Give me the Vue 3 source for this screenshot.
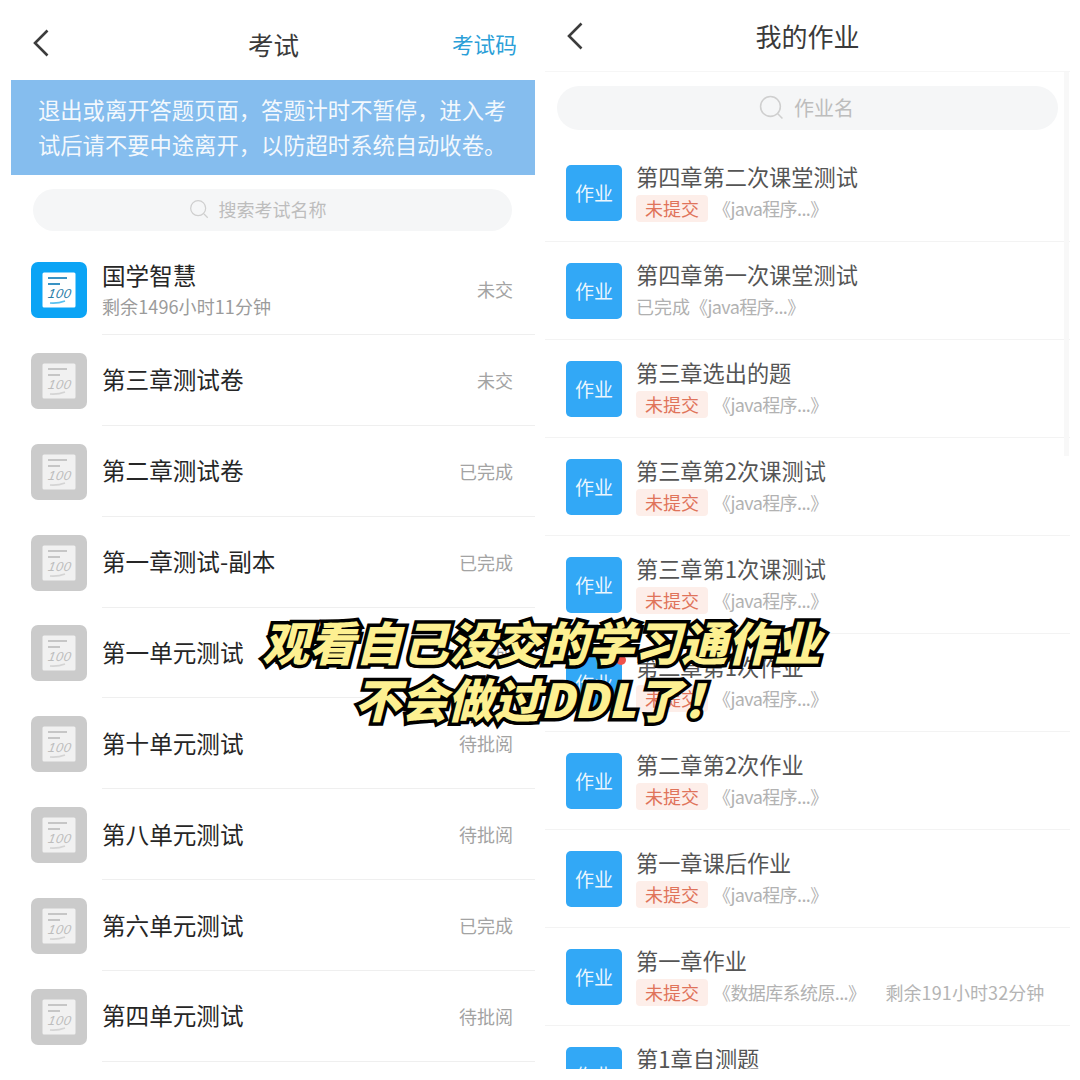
<template>
  <div class="page">
    <!-- 考试 -->
    <section class="panel exam">
      <header class="nav exam-nav">
        <svg class="back" width="18" height="28" viewBox="0 0 18 28"><path d="M15.500 1.500 3 14l12.500 12.500" /></svg>
        <span class="nav-title">考试</span>
        <span class="nav-action">考试码</span>
      </header>
      <div class="banner">退出或离开答题页面，答题计时不暂停，进入考试后请不要中途离开，以防超时系统自动收卷。</div>
      <div class="search exam-search">
        <svg class="search-icon" width="20" height="20" viewBox="0 0 24 24"><circle cx="11" cy="11" r="9" /><path d="m18 18 4.500 4.500" /></svg>
        <span>搜索考试名称</span>
      </div>
      <ul class="exam-list">
        <li v-for="exam in exams" :key="exam.title" class="exam-row">
          <div class="exam-icon" :class="{ active: exam.active }">
            <svg width="36" height="36" viewBox="0 0 36 36">
              <rect width="33" height="35" x="1.500" y="0.500" rx="1.500" class="sheet" />
              <path class="ink-line" d="M7 6h19M7 12h12" />
              <text class="hundred" x="0" y="0" transform="translate(6.500 26) skewX(-10)">100</text>
              <path class="ink-under" d="M9 31c6 .500 11-.500 15-2" />
            </svg>
          </div>
          <div class="exam-body">
            <div class="exam-text">
              <div class="exam-title">{{ exam.title }}</div>
              <div v-if="exam.sub" class="exam-sub">{{ exam.sub }}</div>
            </div>
            <span class="exam-status">{{ exam.status }}</span>
          </div>
        </li>
      </ul>
    </section>

    <!-- 我的作业 -->
    <section class="panel work">
      <header class="nav work-nav">
        <svg class="back" width="18" height="28" viewBox="0 0 18 28"><path d="M15.500 1.500 3 14l12.500 12.500" /></svg>
        <span class="nav-title work-heading">我的作业</span>
        <span></span>
      </header>
      <div class="work-content">
        <i class="scrollbar"></i>
        <div class="search work-search">
          <svg class="search-icon" width="25" height="25" viewBox="0 0 24 24"><circle cx="11" cy="11" r="9.500" /><path d="m18 18 4.500 4.500" /></svg>
          <span>作业名</span>
        </div>
        <ul class="work-list">
          <li v-for="work in works" :key="work.title" class="work-row">
            <div class="work-icon">
              作业
              <i v-if="work.dot" class="dot"></i>
            </div>
            <div class="work-text">
              <div class="work-title">{{ work.title }}</div>
              <div class="work-meta">
                <span v-if="work.done" class="done">已完成</span>
                <span v-else class="tag">未提交</span>
                <span class="course" :class="{ tight: work.done }">《{{ work.course }}...》</span>
                <span v-if="work.left" class="left">{{ work.left }}</span>
              </div>
            </div>
          </li>
        </ul>
      </div>
    </section>

    <!-- 视频字幕 -->
    <div class="caption">
      <div>观看自己没交的学习通作业</div>
      <div>不会做过DDL了！</div>
    </div>
  </div>
</template>

<script setup>
const exams = [
  { title: '国学智慧', sub: '剩余1496小时11分钟', status: '未交', active: true },
  { title: '第三章测试卷', status: '未交' },
  { title: '第二章测试卷', status: '已完成' },
  { title: '第一章测试-副本', status: '已完成' },
  { title: '第一单元测试', status: '已完成' },
  { title: '第十单元测试', status: '待批阅' },
  { title: '第八单元测试', status: '待批阅' },
  { title: '第六单元测试', status: '已完成' },
  { title: '第四单元测试', status: '待批阅' },
]

const works = [
  { title: '第四章第二次课堂测试', course: 'java程序' },
  { title: '第四章第一次课堂测试', course: 'java程序', done: true },
  { title: '第三章选出的题', course: 'java程序' },
  { title: '第三章第2次课测试', course: 'java程序' },
  { title: '第三章第1次课测试', course: 'java程序' },
  { title: '第二章第1次作业', course: 'java程序', dot: true },
  { title: '第二章第2次作业', course: 'java程序' },
  { title: '第一章课后作业', course: 'java程序' },
  { title: '第一章作业', course: '数据库系统原', left: '剩余191小时32分钟' },
  { title: '第1章自测题', course: 'java程序' },
]
</script>

<style>
html,
body {
  margin: 0;
  background: #fff;
}
</style>

<style scoped>
.page {
  position: relative;
  display: flex;
  gap: 10px;
  box-sizing: border-box;
  width: 1080px;
  height: 1080px;
  padding: 0 10px 0 11px;
  overflow: hidden;
  background: #fff;
  font-family: "Noto Sans CJK SC", "Noto Sans", sans-serif;
  color: #333;
}

ul {
  margin: 0;
  padding: 0;
  list-style: none;
}

.panel {
  display: flex;
  flex-direction: column;
  flex: none;
  height: 1069px;
  overflow: hidden;
}
.exam {
  width: 524px;
}
.work {
  width: 525px;
}

/* Top bars */
.nav {
  display: grid;
  grid-template-columns: 1fr auto 1fr;
  align-items: center;
  flex: none;
  box-sizing: border-box;
}
.exam-nav {
  height: 80px;
  padding: 6px 18px 0 19px;
}
.exam-nav .back {
  margin-left: 2px;
}
.work-nav {
  height: 71px;
  padding: 0 21px;
}
.back {
  fill: none;
  stroke: #3c3c3c;
  stroke-width: 2.600;
}
.nav-title {
  font-size: 25.500px;
  color: #3a3a3a;
}
.work-heading {
  font-size: 26px;
}
.nav-action {
  justify-self: end;
  font-size: 21.700px;
  color: #2c9fd8;
}

.banner {
  flex: none;
  box-sizing: border-box;
  height: 95px;
  padding: 12px 20px 0 27px;
  background: #85bdee;
  color: rgba(255, 255, 255, 0.92);
  font-size: 22.300px;
  line-height: 35px;
}

/* Search boxes */
.search {
  display: flex;
  align-items: center;
  justify-content: center;
  flex: none;
  background: #f5f6f7;
  color: #bdbdbd;
}
.search-icon {
  fill: none;
  stroke: #cfcfcf;
  stroke-width: 1.500;
}
.exam-search {
  gap: 10px;
  height: 42px;
  margin: 14px 23px 13px 22px;
  padding: 0 30px 2px 0;
  box-sizing: border-box;
  border-radius: 21px;
  font-size: 18px;
}
.work-search {
  gap: 10px;
  height: 44px;
  margin: 14px 12px 0;
  padding: 0 2px 2px 0;
  box-sizing: border-box;
  border-radius: 22px;
  font-size: 20px;
}

/* Exam list */
.exam-row {
  display: flex;
  height: 90.880px;
}
.exam-icon {
  display: flex;
  align-items: center;
  justify-content: center;
  flex: none;
  align-self: center;
  width: 56px;
  height: 56px;
  margin: 1px 15px 0 20px;
  border-radius: 7px;
  background: #cbcbcb;
}
.exam-icon.active {
  background: #0ba4f5;
}
.sheet {
  fill: #f1f1f1;
}
.active .sheet {
  fill: #fff;
}
.ink-line {
  fill: none;
  stroke: #c6c6c6;
  stroke-width: 1.800;
}
.active .ink-line {
  stroke: #3a93c4;
}
.ink-under {
  fill: none;
  stroke: #d4d4d4;
  stroke-width: 1.600;
}
.active .ink-under {
  stroke: #58c0ef;
}
.hundred {
  font-family: "Liberation Sans", sans-serif;
  font-size: 13px;
  font-style: italic;
  letter-spacing: 0.500px;
  fill: #bdbdbd;
}
.active .hundred {
  fill: #2a7da8;
}
.exam-body {
  display: flex;
  align-items: center;
  justify-content: space-between;
  flex: 1;
  box-sizing: border-box;
  padding-right: 22px;
  border-bottom: 1.500px solid #efefef;
}
.exam-title {
  font-size: 23.600px;
  line-height: 33px;
  color: #262626;
}
.exam-sub {
  margin-top: 1px;
  font-size: 18px;
  letter-spacing: 0.100px;
  line-height: 26px;
  color: #9b9b9b;
}
.exam-status {
  font-size: 18px;
  color: #a3a3a3;
}

/* Homework list */
.work-content {
  position: relative;
  flex: 1;
  border-top: 1px solid #f6f6f6;
  overflow: hidden;
}
.scrollbar {
  position: absolute;
  top: 0;
  right: 1px;
  width: 5px;
  height: 384px;
  background: #f8f8f8;
}
.work-list {
  margin-top: 14px;
}
.work-row {
  display: flex;
  align-items: center;
  box-sizing: border-box;
  height: 98px;
  border-bottom: 1.500px solid #f3f3f3;
}
.work-icon {
  position: relative;
  display: flex;
  align-items: center;
  justify-content: center;
  flex: none;
  width: 56px;
  height: 56px;
  margin: 0 14px 0 21px;
  border-radius: 5px;
  background: #32a8f6;
  color: rgba(255, 255, 255, 0.92);
  font-size: 19px;
}
.dot {
  position: absolute;
  top: 0;
  right: -4px;
  width: 10px;
  height: 10px;
  border-radius: 50%;
  background: #f0524a;
}
.work-title {
  position: relative;
  top: -2px;
  font-size: 22.200px;
  line-height: 30px;
  color: #555;
}
.work-meta {
  display: flex;
  align-items: center;
  height: 28px;
  margin-top: 1px;
  font-size: 18px;
  color: #b2b2b2;
}
.tag {
  box-sizing: border-box;
  width: 72px;
  height: 27px;
  border-radius: 4px;
  background: #fdeee9;
  color: #e0735a;
  line-height: 27px;
  text-align: center;
}
.done {
  color: #b0b0b0;
}
.course {
  margin-left: 5px;
  letter-spacing: -0.600px;
}
.course.tight {
  margin-left: 0;
}
.left {
  margin-left: 20px;
  letter-spacing: 0.100px;
  color: #b4b4b4;
}

/* Caption over the screenshots */
.caption {
  position: absolute;
  top: 612px;
  left: 0;
  width: 1083px;
  color: #fdf091;
  font-size: 46.500px;
  font-style: italic;
  font-weight: 900;
  line-height: 57px;
  text-align: center;
  -webkit-text-stroke: 7px #000;
  paint-order: stroke fill;
  text-shadow: -2px 3px 0 #000;
}
</style>
